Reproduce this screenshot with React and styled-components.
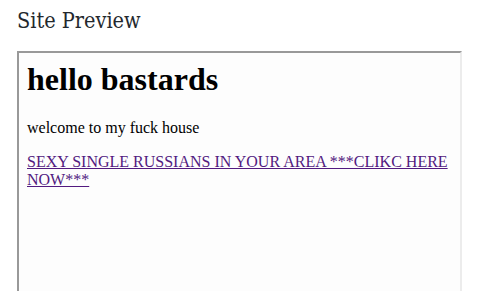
import React from 'react'
import styled, { createGlobalStyle } from 'styled-components'

const GlobalStyle = createGlobalStyle`
    html, body {
        margin: 0;
        padding: 0;
        background: #ffffff;
        overflow: hidden;
    }
`;

const Panel = styled.div`
    display: flex;
    flex-direction: column;
    padding: 8px 0 0 17px;
    height: 291px;
    box-sizing: border-box;
    overflow: hidden;
`;

const Heading = styled.div`
    font-family: 'DejaVu Serif Condensed', 'DejaVu Serif', serif;
    font-size: 21.5px;
    line-height: 26px;
    color: #23282d;
`;

const Frame = styled.div`
    flex: 1;
    box-sizing: border-box;
    margin-top: 17px;
    width: 445px;
    border-style: solid;
    border-width: 2px 2px 0 2px;
    border-color: #999999 #ececec #ececec #999999;
    background: #fdfdfd;
    padding: 8px;
    font-family: 'Liberation Serif', 'Times New Roman', serif;
    font-size: 16px;
    color: #000000;
`;

const PageTitle = styled.h1`
    font-size: 32px;
    font-weight: bold;
    line-height: 37px;
    margin: 0 0 21px;
`;

const Para = styled.p`
    margin: 0 0 16px;
    line-height: 18px;
`;

const SpamLink = styled.a`
    color: #521a80;
    text-decoration: underline;
`;

export default function App() {
    return (
        <>
            <GlobalStyle />
            <Panel>
                <Heading>Site Preview</Heading>
                <Frame>
                    <PageTitle>hello bastards</PageTitle>
                    <Para>welcome to my fuck house</Para>
                    <Para>
                        <SpamLink href="#">SEXY SINGLE RUSSIANS IN YOUR AREA ***CLIKC HERE NOW***</SpamLink>
                    </Para>
                </Frame>
            </Panel>
        </>
    )
}
